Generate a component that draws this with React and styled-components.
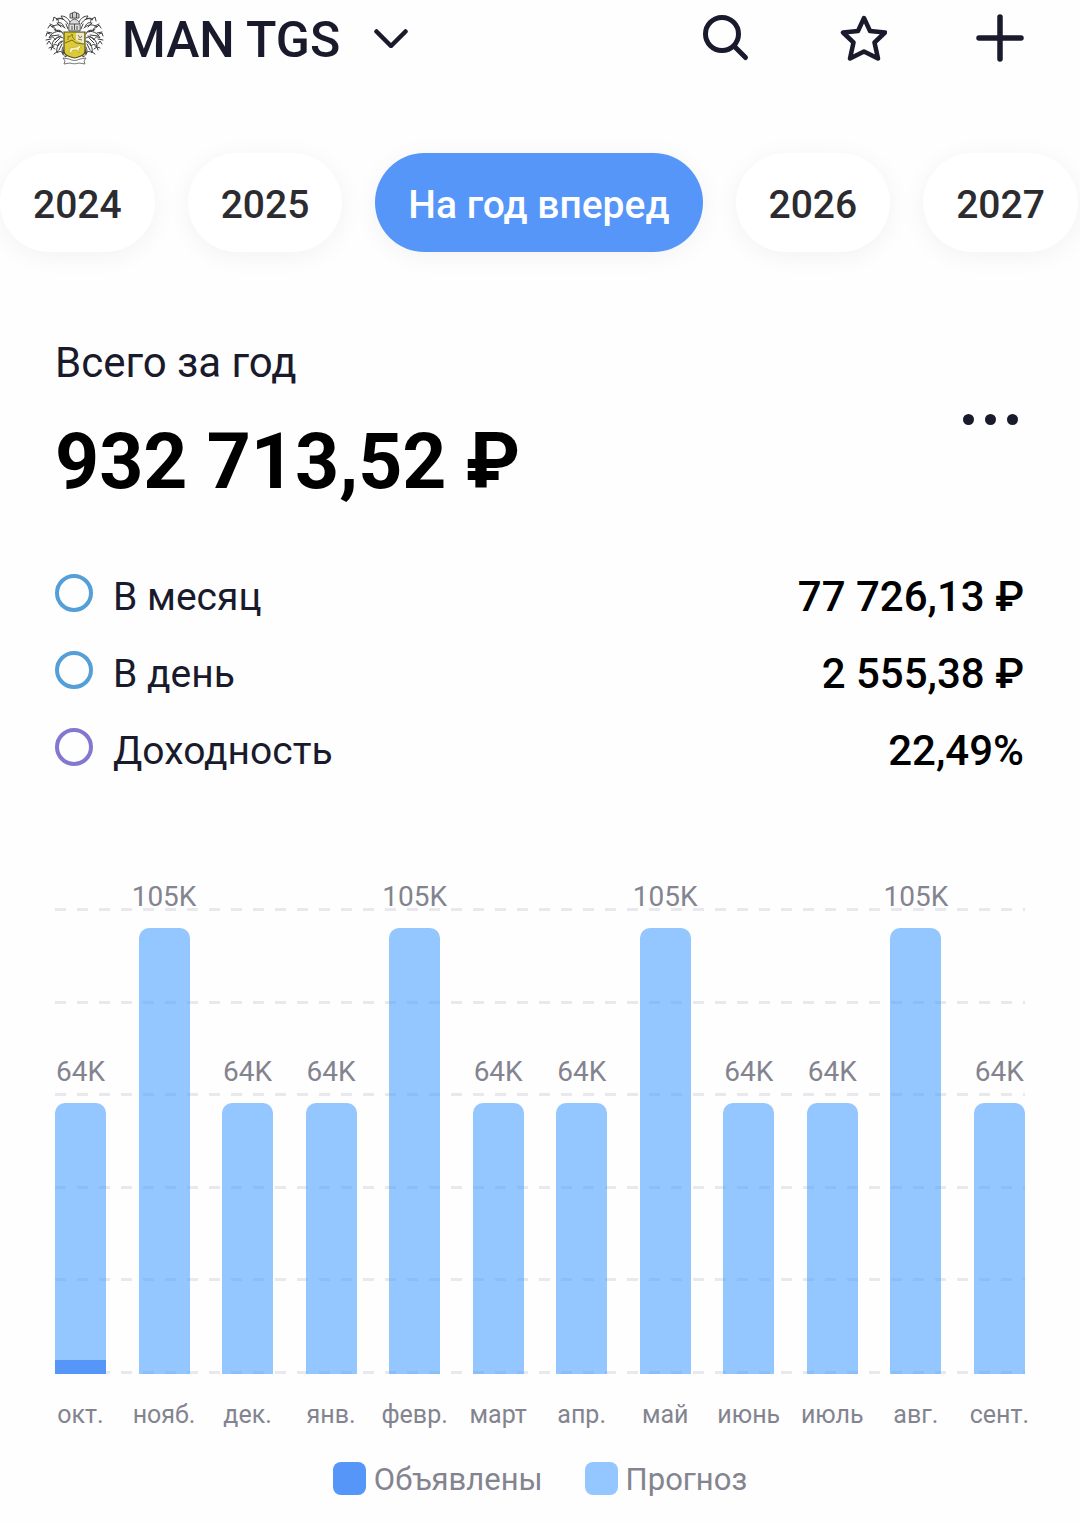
import styled, { createGlobalStyle } from "styled-components";

const GlobalStyle = createGlobalStyle`
  * {
    box-sizing: border-box;
  }
  body {
    margin: 0;
    background: #fefefe;
    color: #191a2b;
    font-family: Roboto, "Liberation Sans", sans-serif;
    overflow-x: hidden;
  }
  button {
    font-family: inherit;
    color: inherit;
    border: none;
    background: none;
    padding: 0;
    cursor: pointer;
  }
`;

const Header = styled.header`
  display: flex;
  align-items: center;
  justify-content: space-between;
  height: 76px;
  padding: 0 56px 0 45px;
`;

const Account = styled.button`
  display: flex;
  align-items: center;
  gap: 18px;
`;

const AccountName = styled.span`
  padding-top: 4px;
  font-size: 50px;
  line-height: 58px;
  font-weight: 500;
  margin-right: 16px;
`;

const Actions = styled.nav`
  display: flex;
  gap: 89px;
`;

const IconButton = styled.button`
  width: 48px;
  height: 48px;
  svg {
    display: block;
  }
`;

const Periods = styled.div`
  display: flex;
  gap: 33px;
  padding: 77px 0 80px;
  overflow: hidden;
`;

const Period = styled.button`
  flex: none;
  height: 99px;
  padding: 4px 33px 0;
  border-radius: 50px;
  font-size: 39px;
  font-weight: 500;
  white-space: nowrap;
  color: ${(props) => (props.$active ? "#fff" : "#2b2b30")};
  background: ${(props) => (props.$active ? "#5596f8" : "#fff")};
  box-shadow: 0 4px 26px rgba(0, 0, 0, 0.05);
`;

const Summary = styled.section`
  display: flex;
  align-items: center;
  justify-content: space-between;
  padding: 6px 56px 0 55px;
`;

const SummaryLabel = styled.h2`
  margin: 0;
  font-size: 42px;
  line-height: 50px;
  font-weight: 400;
`;

const SummaryValue = styled.p`
  margin: 28px 0 0;
  font-size: 77px;
  line-height: 92px;
  font-weight: 700;
  color: #000;
`;

const MoreButton = styled.button`
  display: flex;
  gap: 11px;
  padding: 6px;
  margin-bottom: 8px;
`;

const Dot = styled.span`
  width: 11px;
  height: 11px;
  border-radius: 50%;
  background: #191a2b;
`;

const Stats = styled.dl`
  display: flex;
  flex-direction: column;
  gap: 31px;
  margin: 0;
  padding: 66px 56px 0 55px;
`;

const Stat = styled.div`
  display: flex;
  align-items: flex-start;
  line-height: 46px;
`;

const Ring = styled.span`
  width: 38px;
  height: 38px;
  margin-right: 20px;
  border: 4px solid ${(props) => props.color};
  border-radius: 50%;
`;

const StatName = styled.dt`
  flex: 1;
  font-size: 39px;
`;

const StatValue = styled.dd`
  margin: 0;
  font-size: 42px;
  font-weight: 500;
  color: #000;
`;

const Chart = styled.figure`
  margin: 0;
  padding: 134px 55px 0;
  color: #83848f;
`;

// grid lines and bars share one cell, bars go on top
const Plot = styled.div`
  display: grid;
  height: 466px;
`;

const GridLines = styled.div`
  grid-area: 1 / 1;
  display: flex;
  flex-direction: column;
  justify-content: space-between;
`;

const GridLine = styled.div`
  height: 3px;
  background: repeating-linear-gradient(
    to right,
    #e9e9ed 0 11px,
    transparent 11px 22px
  );
`;

const Bars = styled.div`
  grid-area: 1 / 1;
  display: flex;
  justify-content: space-between;
  min-height: 0;
`;

const Column = styled.div`
  display: flex;
  flex-direction: column;
  align-items: center;
  justify-content: flex-end;
  width: 51px;
  white-space: nowrap;
`;

const Amount = styled.span`
  margin-bottom: 14px;
  font-size: 28px;
  line-height: 34px;
`;

const Bar = styled.div`
  flex: none;
  display: flex;
  flex-direction: column;
  justify-content: flex-end;
  width: 100%;
  border-radius: 10px 10px 0 0;
  background: rgba(67, 157, 255, 0.57);
`;

const Declared = styled.div`
  background: #5596f8;
`;

const Months = styled.div`
  display: flex;
  justify-content: space-between;
  margin-top: 26px;
  font-size: 25px;
  line-height: 30px;
`;

const Legend = styled.figcaption`
  display: flex;
  justify-content: center;
  gap: 42px;
  padding: 32px 0 26px;
  font-size: 31px;
  line-height: 36px;
`;

const LegendItem = styled.span`
  display: flex;
  align-items: flex-start;
  gap: 8px;
`;

const Swatch = styled.span`
  width: 33px;
  height: 33px;
  border-radius: 8px;
  background: ${(props) => props.color};
`;

const periods = ["2024", "2025", "На год вперед", "2026", "2027"];

const stats = [
  { name: "В месяц", value: "77 726,13 ₽", color: "#559fd9" },
  { name: "В день", value: "2 555,38 ₽", color: "#559fd9" },
  { name: "Доходность", value: "22,49%", color: "#8378d0" },
];

const SCALE_MAX = 110;

const months = [
  { name: "окт.", amount: 64, declared: 3.2 },
  { name: "нояб.", amount: 105.3 },
  { name: "дек.", amount: 64 },
  { name: "янв.", amount: 64 },
  { name: "февр.", amount: 105.3 },
  { name: "март", amount: 64 },
  { name: "апр.", amount: 64 },
  { name: "май", amount: 105.3 },
  { name: "июнь", amount: 64 },
  { name: "июль", amount: 64 },
  { name: "авг.", amount: 105.3 },
  { name: "сент.", amount: 64 },
];

const stroke = {
  fill: "none",
  stroke: "#191a2b",
  strokeLinecap: "round",
  strokeLinejoin: "round",
};

// one side of the crest's foliage, mirrored for the other one
const Mantle = () => (
  <g fill="none" stroke="#3c3c3c" strokeWidth="1" strokeLinecap="round">
    <path d="M23 13c-3-5-8-7-12-5 2 0 3 2 2 4 3-1 5 1 6 4" />
    <path d="M20 17c-4-4-9-4-13-1 3 0 4 2 3 4 4-2 7 0 8 3" />
    <path d="M17 21c-5-2-11 1-13 6 3-2 5-1 6 2 2-3 5-4 8-2" />
    <path d="M16 25c-5 1-9 5-9 10 2-2 4-2 6 0 0-3 2-5 5-5" />
    <path d="M17 31c-4 2-6 6-5 11 2-2 4-2 6 0 0-3 1-5 3-6" />
    <path d="M18 36c-2 4-1 8 3 10 0-2 1-4 3-4" />
    <path d="M25 11c-2-4-5-6-9-6l2 3c-3-1-5 0-6 1M5 13l4 2M2 21l5 1M1 29l5-1M4 37l5-2M9 43l4-3" />
    <path d="M12 12l4 4M9 18l6 3M6 25l8-1M10 32l5-5M14 39l3-6M21 13l2 5M18 43l2-5" />
    <path d="M3 17l2-3 2 2M1 25l1-3 3 1M2 33l2-3 2 3M8 10l1-4 3 2M6 39l1-3 3 2" />
  </g>
);

const Crest = () => (
  <svg width="59" height="54" viewBox="0 0 59 54" aria-hidden="true">
    <Mantle />
    <g transform="translate(59 0) scale(-1 1)">
      <Mantle />
    </g>
    <g stroke="#444" strokeWidth="0.9" fill="#dcdcdc">
      <path d="M24 20c-1-7 1-11 5.500-12 4.500 1 6.500 5 5.500 12z" />
      <path d="M25 7V3l2-1 2.500-1 2.500 1 2 1v4z" fill="#cfcfcf" />
      <path d="M27.500 2v5M31.500 2v5M25 13h9M27 15v4M29.500 13v6M32 15v4" fill="none" />
    </g>
    <path
      d="M19 21h21v19c0 4-3 5-10.500 7-7.500-2-10.500-3-10.500-7z"
      fill="#dccb38"
      stroke="#57501f"
      strokeWidth="1.200"
    />
    <path d="M31 22h8v11l-8-4z" fill="#ece9d8" />
    <path d="M20 32l7-3 4 3 8 1" fill="none" stroke="#7a6c16" />
    <path
      d="M23 29v-4l2 1 2-3 1 4 2 2M33 24l2 3 2-2M33 28l4 1"
      fill="none"
      stroke="#8b7c27"
    />
    <path
      d="M24 42l1-5 7-1 3-2 1 2-2 2v4l-2-3h-4l-2 3z"
      fill="#f8f2bd"
      stroke="#b3a233"
      strokeWidth="0.600"
    />
    <path
      d="M18 47l6 1c4 2 7 2 11 0l6-1-2 3 1 3-6-1c-3 1-6 1-9 0l-6 1 1-3z"
      fill="#fff"
      stroke="#666"
      strokeWidth="0.900"
    />
  </svg>
);

const App = () => {
  return (
    <>
      <GlobalStyle />
      <Header>
        <Account type="button">
          <Crest />
          <AccountName>MAN TGS</AccountName>
          <svg width="34" height="20" viewBox="0 0 34 20" aria-hidden="true">
            <path d="M2.500 3.500L17 18 31.500 3.500" {...stroke} strokeWidth="4.500" />
          </svg>
        </Account>
        <Actions>
          <IconButton type="button" aria-label="Поиск">
            <svg width="48" height="48" viewBox="0 0 48 48">
              <circle cx="20" cy="20" r="16.500" {...stroke} strokeWidth="5" />
              <path d="M32 32L43.500 43.500" {...stroke} strokeWidth="5" />
            </svg>
          </IconButton>
          <IconButton type="button" aria-label="Избранное">
            <svg width="48" height="48" viewBox="0 0 48 48">
              <path
                d="M25 4L31 17 46 18.500 35.500 28.500 39 44.500 25 37.500 11 44.500 14.500 28.500 4 18.500 19 17Z"
                {...stroke}
                strokeWidth="4.500"
              />
            </svg>
          </IconButton>
          <IconButton type="button" aria-label="Добавить">
            <svg width="48" height="48" viewBox="0 0 48 48">
              <path d="M24 3v42M3 24h42" {...stroke} strokeWidth="5.500" />
            </svg>
          </IconButton>
        </Actions>
      </Header>

      <Periods>
        {periods.map((period) => (
          <Period
            key={period}
            type="button"
            $active={period === "На год вперед"}
          >
            {period}
          </Period>
        ))}
      </Periods>

      <Summary>
        <div>
          <SummaryLabel>Всего за год</SummaryLabel>
          <SummaryValue>932 713,52 ₽</SummaryValue>
        </div>
        <MoreButton type="button" aria-label="Ещё">
          <Dot />
          <Dot />
          <Dot />
        </MoreButton>
      </Summary>

      <Stats>
        {stats.map((stat) => (
          <Stat key={stat.name}>
            <Ring color={stat.color} />
            <StatName>{stat.name}</StatName>
            <StatValue>{stat.value}</StatValue>
          </Stat>
        ))}
      </Stats>

      <Chart>
        <Plot>
          <GridLines>
            {[0, 1, 2, 3, 4, 5].map((line) => (
              <GridLine key={line} />
            ))}
          </GridLines>
          <Bars>
            {months.map(({ name, amount, declared }) => (
              <Column key={name}>
                <Amount>{Math.round(amount)}K</Amount>
                <Bar style={{ height: `${(amount / SCALE_MAX) * 100}%` }}>
                  {declared && (
                    <Declared
                      style={{ height: `${(declared / amount) * 100}%` }}
                    />
                  )}
                </Bar>
              </Column>
            ))}
          </Bars>
        </Plot>
        <Months>
          {months.map(({ name }) => (
            <Column key={name}>{name}</Column>
          ))}
        </Months>
        <Legend>
          <LegendItem>
            <Swatch color="#5596f8" />
            Объявлены
          </LegendItem>
          <LegendItem>
            <Swatch color="#94c7ff" />
            Прогноз
          </LegendItem>
        </Legend>
      </Chart>
    </>
  );
};

export default App;
